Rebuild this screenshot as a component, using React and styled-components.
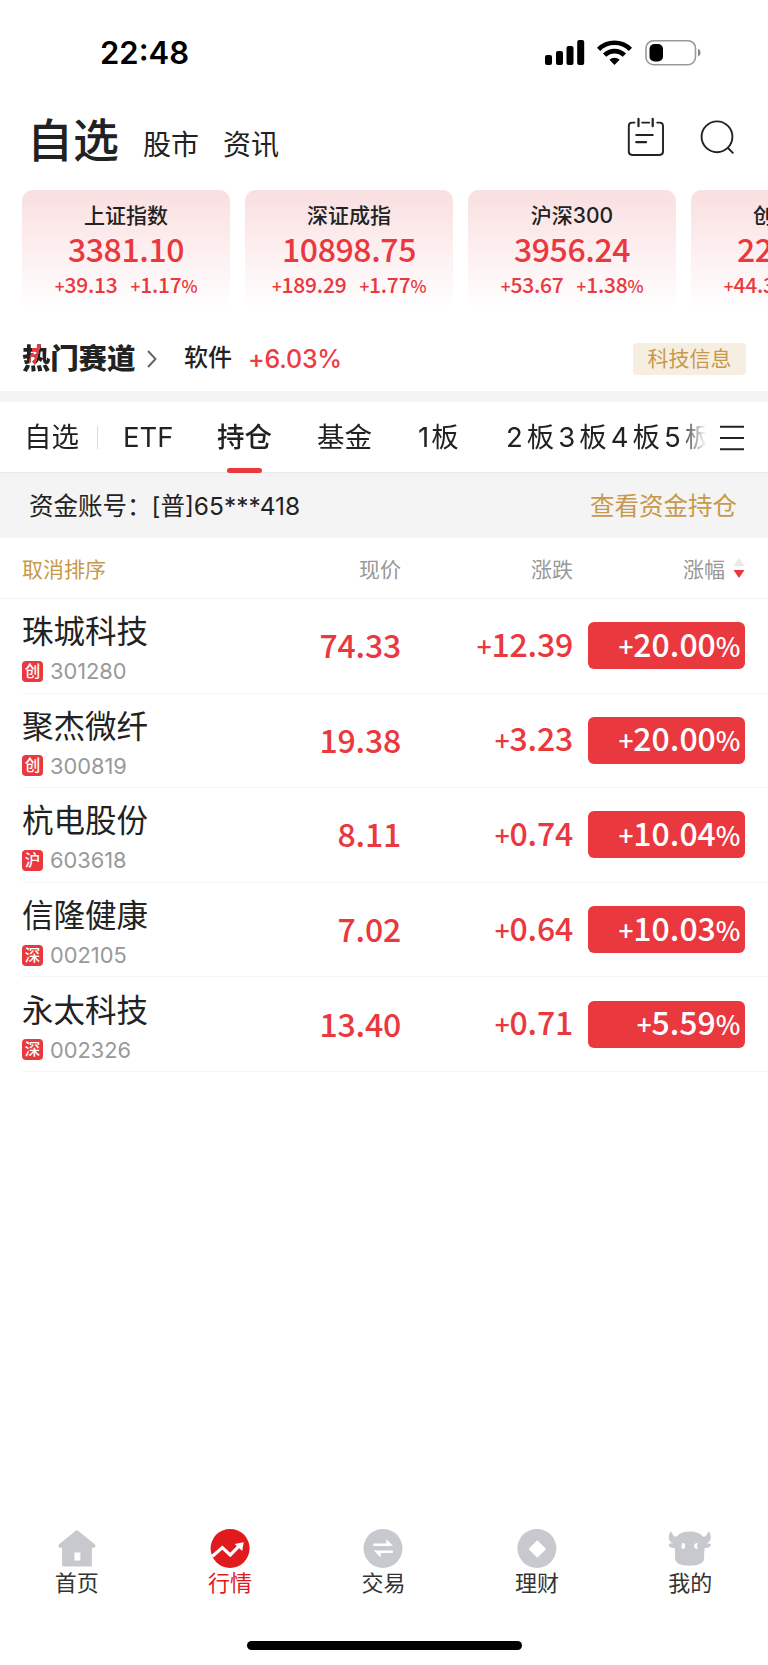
import styled, { createGlobalStyle } from "styled-components";

const GlobalStyle = createGlobalStyle`
  * {
    box-sizing: border-box;
  }

  body {
    margin: 0;
    background: #fff;
    color: #222;
    font-family: Inter, "Noto Sans CJK SC", sans-serif;
    overflow-x: hidden;
  }
`;

const Screen = styled.div`
  display: flex;
  flex-direction: column;
  width: 768px;
  height: 1665px;
  overflow: hidden;
  background: #fff;
  white-space: nowrap;
`;

const StatusBar = styled.div`
  display: flex;
  justify-content: space-between;
  align-items: center;
  height: 105px;
  padding: 0 66px 0 100px;
`;

const Clock = styled.span`
  font-size: 31px;
  font-weight: 600;
  line-height: 40px;
  color: #000;
`;

const Header = styled.header`
  display: flex;
  justify-content: space-between;
  height: 85px;
  padding: 0 34px 0 27px;
`;

const HeaderTabs = styled.nav`
  display: flex;
  align-items: flex-start;
`;

const HeaderTab = styled.span`
  margin-right: 24px;
  padding-top: 5px;
  font-size: 28px;
  line-height: 70px;
`;

const HeaderTitle = styled.h1`
  margin: 0 24px 0 0;
  font-size: 46px;
  font-weight: 500;
  line-height: 70px;
`;

const HeaderIcons = styled.div`
  display: flex;
  gap: 35px;
  padding-top: 12px;
`;

const Cards = styled.div`
  display: flex;
  gap: 15px;
  height: 135px;
  padding-left: 22px;
`;

const Card = styled.div`
  display: flex;
  flex-direction: column;
  align-items: center;
  flex: 0 0 208px;
  height: 120px;
  padding-top: 11px;
  border-radius: 11px;
  background: linear-gradient(#f9dfe0, #fdeff0 50%, #fff);
`;

const CardTitle = styled.span`
  font-size: 21px;
  font-weight: 500;
  line-height: 29px;
`;

const CardChange = styled.div`
  display: flex;
  gap: 13px;
  margin-top: 5px;
  line-height: 26px;
`;

const Figure = styled.span`
  display: inline-flex;
  justify-content: flex-end;
  align-items: baseline;
  font-family: "Noto Sans CJK SC", sans-serif;
  font-size: ${({ $size }) => $size || 32}px;
  font-weight: 500;
  line-height: ${({ $line }) => $line || 42}px;
  letter-spacing: ${({ $spacing }) => $spacing || 0}px;
  color: ${({ $color }) => $color || "#ea383f"};
`;

const Sign = styled.span`
  font-size: 0.82em;
`;

const Percent = styled.span`
  font-size: 0.82em;
  letter-spacing: -0.5px;
`;

const HotRow = styled.div`
  display: flex;
  align-items: center;
  height: 66px;
  padding: 2px 22px 0;
`;

const HotTitle = styled.h2`
  margin: 0;
  width: 113px;
  font-size: 28.5px;
  font-weight: 900;
  line-height: 40px;
  letter-spacing: -0.2px;
`;

const HotFirstChar = styled.span`
  background:
    linear-gradient(
        105deg,
        transparent 36%,
        #ea383f 36%,
        #ea383f 58%,
        transparent 58%
      )
      top / 100% 68% no-repeat,
    #222;
  background-clip: text;
  color: transparent;
`;

const HotName = styled.span`
  width: 64px;
  margin-left: 27px;
  font-size: 24px;
  font-weight: 500;
  line-height: 34px;
  padding-bottom: 2px;
`;

const HotChange = styled.span`
  font-size: 25px;
  font-weight: 500;
  letter-spacing: -0.2px;
  color: #ef3b42;
`;

const Tag = styled.span`
  width: 113px;
  height: 32px;
  margin-left: auto;
  border-radius: 4px;
  background: #f7eee2;
  color: #c8994a;
  font-size: 21px;
  line-height: 32px;
  text-align: center;
`;

const Divider = styled.div`
  height: 11px;
  background: #f4f4f4;
`;

const TabBar = styled.div`
  display: flex;
  align-items: center;
  height: 71px;
  padding-right: 24px;
  border-bottom: 1px solid #eaeaea;
`;

const TabList = styled.div`
  display: flex;
  align-items: center;
  flex: 0 0 706px;
  height: 71px;
  padding-left: 24px;
  overflow: hidden;
  mask-image: linear-gradient(90deg, #000 680px, transparent 706px);
`;

const Tab = styled.span`
  position: relative;
  flex: none;
  width: ${({ $width }) => $width}px;
  font-size: 27.5px;
  font-weight: ${({ $active }) => ($active ? 500 : 400)};
  line-height: 71px;
  letter-spacing: ${({ $spacing }) => $spacing || 0}px;

  &::after {
    content: "";
    display: ${({ $active }) => ($active ? "block" : "none")};
    position: absolute;
    left: 10px;
    bottom: 0;
    width: 35px;
    height: 5px;
    border-radius: 3px;
    background: #ea383f;
  }
`;

const TabSeparator = styled.span`
  flex: none;
  width: 1px;
  height: 23px;
  margin-right: 25px;
  background: #ddd;
`;

const MenuButton = styled.span`
  display: flex;
  flex: none;
  margin-left: 14px;
  padding-top: 1px;
`;

const AccountBar = styled.div`
  display: flex;
  justify-content: space-between;
  align-items: center;
  height: 65px;
  padding: 0 31px 2px 29px;
  background: #f4f4f4;
  font-size: 24.5px;
`;

const AccountNumber = styled.span`
  letter-spacing: 0;
`;

const AccountLink = styled.span`
  color: #c8994a;
`;

const TableHead = styled.div`
  display: grid;
  grid-template-columns: 228px 151px 172px 152px 20px;
  align-items: center;
  height: 61px;
  padding: 0 0 1px 22px;
  border-bottom: 1px solid #f3f3f3;
`;

const HeadCell = styled.span`
  font-size: 21px;
  color: ${({ $gold }) => ($gold ? "#c8994a" : "#999")};
  text-align: ${({ $gold }) => ($gold ? "left" : "right")};
`;

const SortIcon = styled.span`
  display: flex;
  justify-content: flex-end;
`;

const StockRow = styled.div`
  display: grid;
  grid-template-columns: 228px 151px 172px 157px;
  align-items: center;
  height: 94.6px;
  margin-left: 22px;
  border-bottom: 1px solid #f5f5f5;
`;

const StockInfo = styled.div`
  display: flex;
  flex-direction: column;
  padding-top: 2px;
`;

const StockName = styled.span`
  font-size: 31.5px;
  line-height: 42px;
`;

const StockMeta = styled.span`
  display: flex;
  align-items: center;
  height: 22px;
  margin-top: 7px;
`;

const MarketBadge = styled.span`
  width: 21px;
  height: 21px;
  margin-right: 7px;
  border-radius: 4px;
  background: #ea383f;
  color: #fff;
  font-size: 15.5px;
  font-weight: 500;
  line-height: 21px;
  text-align: center;
`;

const StockCode = styled.span`
  font-size: 21.8px;
  line-height: 22px;
  color: #999;
`;

const StockFigure = styled.div`
  display: flex;
  justify-content: flex-end;
  padding-bottom: 3px;
`;

const PercentBox = styled.div`
  display: flex;
  justify-content: flex-end;
  align-items: center;
  height: 47px;
  margin-left: 15px;
  margin-right: -15px;
  padding: 0 5px 3px 0;
  border-radius: 6px;
  background: #ea383f;
`;

const BottomNav = styled.nav`
  display: grid;
  grid-template-columns: repeat(5, 1fr);
  height: 110px;
  margin-top: auto;
  margin-right: 1px;
`;

const NavItem = styled.div`
  display: flex;
  flex-direction: column;
  align-items: center;
  color: ${({ $active }) => ($active ? "#e01a1d" : "#333")};
  font-size: 22px;
  line-height: 30px;
`;

const NavIcon = styled.svg`
  width: 44px;
  height: 40px;
`;

const HomeIndicator = styled.div`
  flex: none;
  align-self: center;
  width: 275px;
  height: 9px;
  margin: 3px 0 15px;
  border-radius: 5px;
  background: #000;
`;

const indices = [
  { name: "上证指数", value: "3381.10", change: "+39.13", percent: "+1.17%" },
  { name: "深证成指", value: "10898.75", change: "+189.29", percent: "+1.77%" },
  { name: "沪深300", value: "3956.24", change: "+53.67", percent: "+1.38%" },
  { name: "创业板指", value: "2237.36", change: "+44.39", percent: "+2.02%" },
];

const tabs = [
  { label: "ETF", width: 94 },
  { label: "持仓", width: 100, active: true },
  { label: "基金", width: 101 },
  { label: "1板", width: 88, spacing: 2 },
  { label: "2板3板4板5板", width: 220, spacing: 4 },
];

const stocks = [
  { name: "珠城科技", market: "创", code: "301280", price: "74.33", change: "+12.39", percent: "+20.00%" },
  { name: "聚杰微纤", market: "创", code: "300819", price: "19.38", change: "+3.23", percent: "+20.00%" },
  { name: "杭电股份", market: "沪", code: "603618", price: "8.11", change: "+0.74", percent: "+10.04%" },
  { name: "信隆健康", market: "深", code: "002105", price: "7.02", change: "+0.64", percent: "+10.03%" },
  { name: "永太科技", market: "深", code: "002326", price: "13.40", change: "+0.71", percent: "+5.59%" },
];

const SignedFigure = ({ value, ...rest }) => {
  const isPercent = value.endsWith("%");

  return (
    <Figure {...rest}>
      <Sign>{value[0]}</Sign>
      <span>{value.slice(1, isPercent ? -1 : undefined)}</span>
      {isPercent && <Percent>%</Percent>}
    </Figure>
  );
};

const StatusIcons = () => (
  <svg width="158" height="27" viewBox="544 38 158 27">
    <rect x="545" y="54" width="7" height="10" rx="2" />
    <rect x="556" y="50" width="7" height="14" rx="2" />
    <rect x="566.5" y="45" width="7" height="19" rx="2" />
    <rect x="577.2" y="39" width="7" height="25" rx="2" />
    <g fill="none" stroke="#000" strokeWidth="4.6">
      <path d="M598.6 48.3 A22.5 22.5 0 0 1 630.4 48.3" />
      <path d="M604.6 54.2 A14 14 0 0 1 624.4 54.2" />
    </g>
    <path d="M609.4 58.7 A7.4 7.4 0 0 1 619.6 58.7 L614.5 64 Z" />
    <rect x="646" y="39.7" width="49.5" height="24" rx="7.5" fill="none" stroke="#999" strokeWidth="1.6" />
    <rect x="649.5" y="43" width="13.5" height="17.5" rx="5" />
    <path d="M698 47.8 A4.2 4.2 0 0 1 698 55.6 Z" fill="#888" />
  </svg>
);

const CalendarIcon = () => (
  <svg width="38" height="40" viewBox="628 117 38 40" fill="none" stroke="#222" strokeWidth="1.9" strokeLinecap="round">
    <path d="M635.6 122.6 H633.2 Q629.8 122.6 629.8 126 V151.6 Q629.8 155 633.2 155 H660.6 Q664 155 664 151.6 V126 Q664 122.6 660.6 122.6 H658.2 M643.2 122.6 H650.2" />
    <path d="M639.5 118.8 V126.2 M653.7 118.8 V126.2" strokeWidth="2.2" />
    <path d="M637.3 135 H653.7 M637.3 142.2 H647" strokeWidth="2.2" />
  </svg>
);

const SearchIcon = () => (
  <svg width="34" height="40" viewBox="700 117 34 40" fill="none" stroke="#222" strokeWidth="1.9" strokeLinecap="round">
    <circle cx="717" cy="136.8" r="15.4" />
    <path d="M728 148 L732.8 152.8" />
  </svg>
);

const HomeIcon = () => (
  <NavIcon viewBox="54.6 1527 44 40">
    <path
      fill="#c8c9ce"
      fillRule="evenodd"
      d="M75 1530 Q76.5 1528.4 78 1530 L94.6 1543.6 Q96 1545.4 94 1546.8 H91.5 V1564.2 Q91.5 1565.5 90 1565.5 H63.2 Q61.7 1565.5 61.7 1564.2 V1546.8 H59 Q57 1545.4 58.4 1543.6 Z M74 1551.5 V1559.5 H80 V1551.5 Z"
    />
  </NavIcon>
);

const MarketIcon = () => (
  <NavIcon viewBox="208.5 1527 44 40">
    <circle cx="230.6" cy="1547.4" r="19.5" fill="#e01a1d" />
    <path d="M213 1555.3 L222.8 1546.6 L230.8 1554 L240.5 1544.2" fill="none" stroke="#fff" strokeWidth="3.2" />
    <path d="M235.2 1543 L244.2 1541.3 L242.7 1550 Z" fill="#fff" />
  </NavIcon>
);

const TradeIcon = () => (
  <NavIcon viewBox="362 1527 44 40">
    <circle cx="384" cy="1547.4" r="19.5" fill="#c8c9ce" />
    <path d="M374.3 1542.6 H387.3 V1538.2 L394 1545 H374.3 Z M393.8 1549.6 H374.6 L381.8 1556.6 V1552 H393.8 Z" fill="#fff" />
  </NavIcon>
);

const WealthIcon = () => (
  <NavIcon viewBox="515.5 1527 44 40">
    <circle cx="537.4" cy="1547.4" r="19.5" fill="#c8c9ce" />
    <path d="M537.8 1539.2 L546.6 1548 L537.8 1556.8 L529 1548 Z" fill="#fff" />
  </NavIcon>
);

const BullIcon = () => (
  <NavIcon viewBox="669 1527 44 40">
    <path
      fill="#c8c9ce"
      d="M671.5 1530.6 Q668.2 1535.5 671 1540.3 Q672.4 1542 674.5 1542.4 Q670 1541.6 669.6 1543.8 Q670.5 1547.2 675.7 1547 Q676.2 1552 676.1 1556 Q675.1 1564.5 690.6 1564.7 Q706.1 1564.5 705.1 1556 Q705 1552 705.8 1547 Q711.3 1547 712 1543.8 Q711.2 1541.6 706.8 1542.4 Q709.2 1542 710.5 1540.3 Q713.3 1535.5 710 1530.6 Q708.6 1531.4 707.9 1533.4 Q707 1535.5 704.2 1535.7 Q699.5 1530.6 690.8 1530.6 Q682 1530.6 677.3 1535.7 Q674.7 1535.5 673.7 1533.4 Q673 1531.4 671.5 1530.6 Z"
    />
    <ellipse cx="684.3" cy="1545" rx="1.8" ry="3" fill="#fff" />
    <path d="M698.8 1542 Q695 1542 695 1545 Q695 1548 698.8 1548 Q697 1545 698.8 1542 Z" fill="#fff" />
  </NavIcon>
);

const navItems = [
  { label: "首页", Icon: HomeIcon },
  { label: "行情", Icon: MarketIcon, active: true },
  { label: "交易", Icon: TradeIcon },
  { label: "理财", Icon: WealthIcon },
  { label: "我的", Icon: BullIcon },
];

const App = () => {
  return (
    <>
      <GlobalStyle />
      <Screen>
        <StatusBar>
          <Clock>22:48</Clock>
          <StatusIcons />
        </StatusBar>

        <Header>
          <HeaderTabs>
            <HeaderTitle>自选</HeaderTitle>
            <HeaderTab>股市</HeaderTab>
            <HeaderTab>资讯</HeaderTab>
          </HeaderTabs>
          <HeaderIcons>
            <CalendarIcon />
            <SearchIcon />
          </HeaderIcons>
        </Header>

        <Cards>
          {indices.map(({ name, value, change, percent }) => (
            <Card key={name}>
              <CardTitle>{name}</CardTitle>
              <Figure $line={36} $spacing={-0.4}>
                {value}
              </Figure>
              <CardChange>
                <SignedFigure value={change} $size={21} $line={26} $spacing={-0.2} />
                <SignedFigure value={percent} $size={21} $line={26} $spacing={-0.2} />
              </CardChange>
            </Card>
          ))}
        </Cards>

        <HotRow>
          <HotTitle>
            <HotFirstChar>热</HotFirstChar>门赛道
          </HotTitle>
          <svg width="22" height="20" viewBox="0 0 22 20" fill="none" stroke="#666" strokeWidth="2">
            <path d="M13 2 L20.5 10 L13 18" />
          </svg>
          <HotName>软件</HotName>
          <HotChange>+6.03%</HotChange>
          <Tag>科技信息</Tag>
        </HotRow>

        <Divider />

        <TabBar>
          <TabList>
            <Tab $width={73}>自选</Tab>
            <TabSeparator />
            {tabs.map(({ label, width, active, spacing }) => (
              <Tab key={label} $width={width} $active={active} $spacing={spacing}>
                {label}
              </Tab>
            ))}
          </TabList>
          <MenuButton>
            <svg width="24" height="26" viewBox="0 0 24 26" stroke="#222" strokeWidth="2">
              <path d="M0 1.7 H24 M0 13 H24 M0 24.3 H24" />
            </svg>
          </MenuButton>
        </TabBar>

        <AccountBar>
          <AccountNumber>资金账号：[普]65***418</AccountNumber>
          <AccountLink>查看资金持仓</AccountLink>
        </AccountBar>

        <TableHead>
          <HeadCell $gold>取消排序</HeadCell>
          <HeadCell>现价</HeadCell>
          <HeadCell>涨跌</HeadCell>
          <HeadCell>涨幅</HeadCell>
          <SortIcon>
            <svg width="12" height="20" viewBox="0 0 12 20">
              <path d="M6 0 L11.5 8 H0.5 Z" fill="#e9e9e9" />
              <path d="M0.5 12 H11.5 L6 20 Z" fill="#ea383f" />
            </svg>
          </SortIcon>
        </TableHead>

        {stocks.map(({ name, market, code, price, change, percent }) => (
          <StockRow key={code}>
            <StockInfo>
              <StockName>{name}</StockName>
              <StockMeta>
                <MarketBadge>{market}</MarketBadge>
                <StockCode>{code}</StockCode>
              </StockMeta>
            </StockInfo>
            <StockFigure>
              <Figure $spacing={-0.2}>{price}</Figure>
            </StockFigure>
            <StockFigure>
              <SignedFigure value={change} $spacing={-0.2} />
            </StockFigure>
            <PercentBox>
              <SignedFigure value={percent} $color="#fff" />
            </PercentBox>
          </StockRow>
        ))}

        <BottomNav>
          {navItems.map(({ label, Icon, active }) => (
            <NavItem key={label} $active={active}>
              <Icon />
              {label}
            </NavItem>
          ))}
        </BottomNav>
        <HomeIndicator />
      </Screen>
    </>
  );
};

export default App;
